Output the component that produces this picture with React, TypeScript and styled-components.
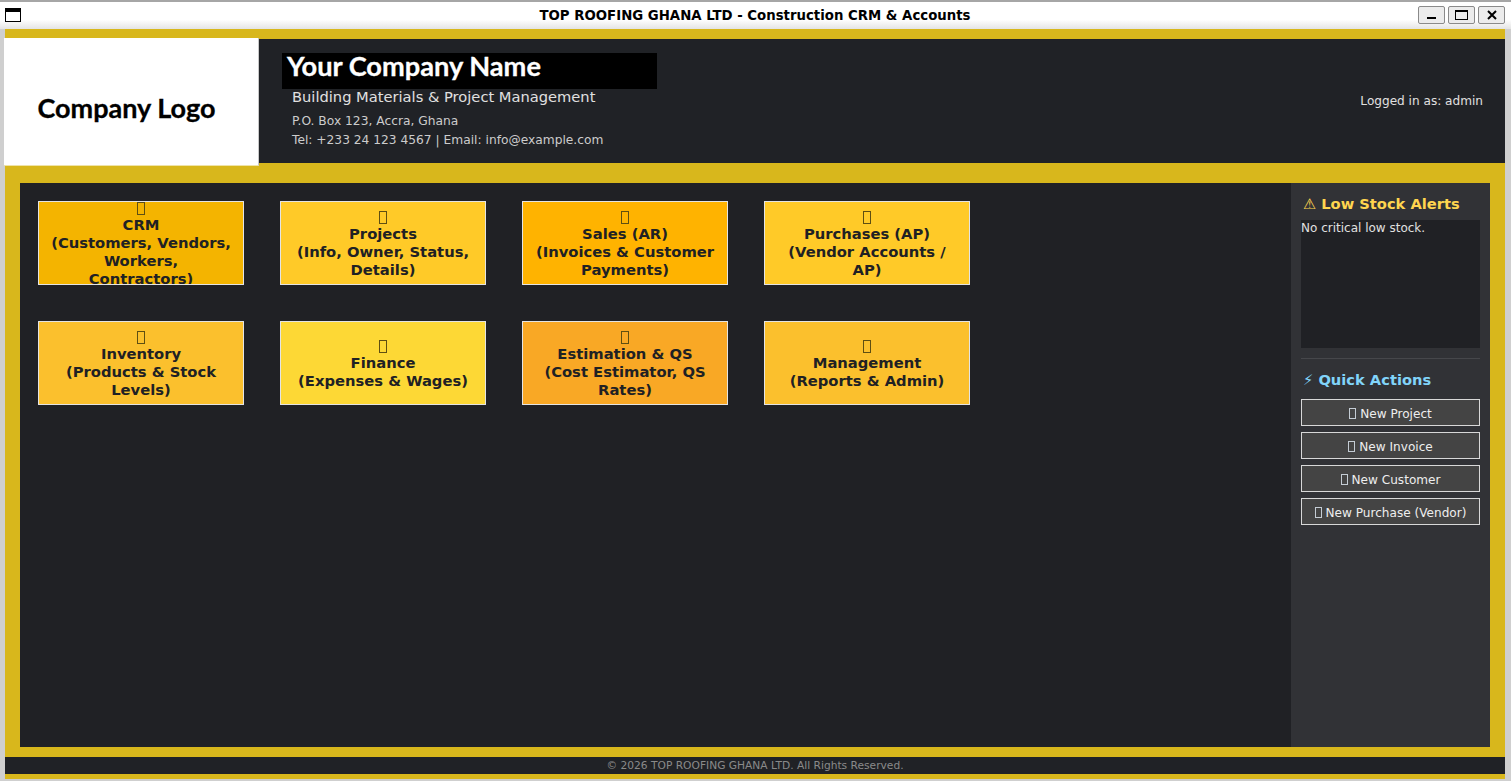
import { createGlobalStyle, styled } from "styled-components"

const tiles = [
    { bg: "#F4B400", lines: ["CRM", "(Customers, Vendors,", "Workers,", "Contractors)"] },
    { bg: "#FFCA28", lines: ["Projects", "(Info, Owner, Status,", "Details)"] },
    { bg: "#FFB300", lines: ["Sales (AR)", "(Invoices & Customer", "Payments)"] },
    { bg: "#FFCA28", lines: ["Purchases (AP)", "(Vendor Accounts /", "AP)"] },
    { bg: "#FBC02D", lines: ["Inventory", "(Products & Stock", "Levels)"] },
    { bg: "#FDD835", lines: ["Finance", "(Expenses & Wages)"] },
    { bg: "#F9A825", lines: ["Estimation & QS", "(Cost Estimator, QS", "Rates)"] },
    { bg: "#FBC02D", lines: ["Management", "(Reports & Admin)"] },
]

const actions = ["New Project", "New Invoice", "New Customer", "New Purchase (Vendor)"]

export default function App() {
    return (
        <>
            <Global />
            <Window>
                <TitleBar>
                    <WindowIcon width="16" height="14" viewBox="0 0 16 14">
                        <rect x="0" y="0" width="16" height="14" fill="#000" />
                        <rect x="1" y="4" width="14" height="9" fill="#fff" />
                    </WindowIcon>
                    <TitleText>TOP ROOFING GHANA LTD - Construction CRM &amp; Accounts</TitleText>
                    <WinButtons>
                        <WinButton>
                            <svg width="9" height="9" viewBox="0 0 9 9">
                                <rect x="0" y="7" width="9" height="2" fill="#000" />
                            </svg>
                        </WinButton>
                        <WinButton>
                            <svg width="13" height="10" viewBox="0 0 13 10">
                                <rect x="0.5" y="0.5" width="12" height="9" fill="none" stroke="#000" />
                                <rect x="0" y="0" width="13" height="2" fill="#000" />
                            </svg>
                        </WinButton>
                        <WinButton>
                            <svg width="10" height="10" viewBox="0 0 10 10">
                                <path d="M1 1 L9 9 M9 1 L1 9" stroke="#000" strokeWidth="2" fill="none" />
                            </svg>
                        </WinButton>
                    </WinButtons>
                </TitleBar>
                <Frame>
                    <Header>
                        <LogoBox>Company Logo</LogoBox>
                        <CompanyInfo>
                            <NameBanner>Your Company Name</NameBanner>
                            <Tagline>Building Materials &amp; Project Management</Tagline>
                            <Address>P.O. Box 123, Accra, Ghana</Address>
                            <Contact>Tel: +233 24 123 4567 | Email: info@example.com</Contact>
                        </CompanyInfo>
                        <LoggedIn>Logged in as: admin</LoggedIn>
                    </Header>
                    <Main>
                        <TileArea>
                            <TileGrid>
                                {tiles.map((t) => (
                                    <Tile key={t.lines[0]} $bg={t.bg}>
                                        <div><TileGlyph /></div>
                                        {t.lines.map((l) => (
                                            <div key={l}>{l}</div>
                                        ))}
                                    </Tile>
                                ))}
                            </TileGrid>
                        </TileArea>
                        <Sidebar>
                            <AlertTitle>⚠ Low Stock Alerts</AlertTitle>
                            <AlertBox>No critical low stock.</AlertBox>
                            <Divider />
                            <ActionsTitle>⚡ Quick Actions</ActionsTitle>
                            <ActionList>
                                {actions.map((a) => (
                                    <ActionButton key={a}><ButtonGlyph />{a}</ActionButton>
                                ))}
                            </ActionList>
                        </Sidebar>
                    </Main>
                    <Footer>© 2026 TOP ROOFING GHANA LTD. All Rights Reserved.</Footer>
                </Frame>
            </Window>
        </>
    )
}

const Global = createGlobalStyle`
html, body {
    margin: 0;
    padding: 0;
    height: 100%;
    overflow: hidden;
    background: #cfcfcf;
}
* {
    box-sizing: border-box;
}
`
const Window = styled.div`
width: 1511px;
height: 781px;
display: flex;
flex-direction: column;
font-family: "DejaVu Sans", sans-serif;
background: #cfcfcf;
padding-bottom: 2px;
`
const TitleBar = styled.div`
height: 29px;
flex-shrink: 0;
border-top: 2px solid #a6a6a6;
background: linear-gradient(#fff 0%, #fff 65%, #e4e4e4 100%);
display: flex;
align-items: center;
padding: 0 6px 2px 5px;
`
const WindowIcon = styled.svg`
flex-shrink: 0;
`
const TitleText = styled.div`
flex: 1;
text-align: center;
font-size: 13.3px;
font-weight: 700;
color: #000;
padding: 2px 0 0 71px;
white-space: nowrap;
`
const WinButtons = styled.div`
display: flex;
gap: 3px;
`
const WinButton = styled.div`
width: 27px;
height: 18px;
border: 1px solid #8a8a8a;
border-radius: 2px;
background: #ececec;
display: flex;
align-items: center;
justify-content: center;
`
const Frame = styled.div`
flex: 1;
margin: 0 6px 0 5px;
background: #D8B71C;
padding: 10px 0 5px;
display: flex;
flex-direction: column;
min-height: 0;
`
const Header = styled.div`
height: 124px;
flex-shrink: 0;
background: #202226;
display: flex;
`
const LogoBox = styled.div`
width: 255px;
height: 128px;
margin: -1px 0 0 -1px;
flex-shrink: 0;
background: #fff;
border-right: 1px solid #c8c8c8;
border-bottom: 1px solid #efe3a8;
display: flex;
align-items: center;
justify-content: center;
padding: 11px 9px 0 0;
font-family: "Lato", sans-serif;
font-weight: 700;
font-size: 27px;
color: #000;
-webkit-text-stroke: 0.3px #000;
position: relative;
z-index: 1;
`
const CompanyInfo = styled.div`
padding: 14px 0 0 23px;
display: flex;
flex-direction: column;
flex: 1;
`
const NameBanner = styled.div`
width: 375px;
height: 36px;
background: #000;
color: #fff;
font-family: "Lato", sans-serif;
font-weight: 700;
font-size: 27.2px;
line-height: 25px;
padding-left: 5px;
-webkit-text-stroke: 0.3px #fff;
`
const Tagline = styled.div`
margin: 0 0 0 10px;
font-size: 14.66px;
line-height: 16px;
color: #e0e0e0;
`
const Address = styled.div`
margin: 8px 0 0 10px;
font-size: 12.28px;
line-height: 16px;
color: #cccccc;
`
const Contact = styled.div`
margin: 3px 0 0 10px;
font-size: 12.24px;
line-height: 16px;
color: #cccccc;
`
const LoggedIn = styled.div`
align-self: center;
padding-right: 22px;
font-size: 12.1px;
color: #e0e0e0;
`
const Main = styled.div`
flex: 1;
min-height: 0;
margin: 20px 15px 10px;
display: flex;
background: #202125;
`
const TileArea = styled.div`
flex: 1;
padding: 18px;
`
const TileGrid = styled.div`
display: grid;
grid-template-columns: repeat(4, 206px);
grid-auto-rows: 84px;
gap: 36px;
`
const Tile = styled.div<{ $bg: string }>`
background: ${(p) => p.$bg};
border: 1px solid #e4e4e4;
display: flex;
flex-direction: column;
justify-content: center;
align-items: center;
overflow: hidden;
color: #202124;
font-size: 14.75px;
font-weight: 700;
line-height: 18px;
text-align: center;
white-space: nowrap;
`
// the missing-glyph boxes that stand where the icons fell back
const TileGlyph = styled.span`
display: inline-block;
width: 8px;
height: 13px;
border: 1px solid #5f4f12;
vertical-align: -3px;
`
const ButtonGlyph = styled.span`
display: inline-block;
width: 7px;
height: 11px;
border: 1px solid #c4ccd4;
margin-right: 4px;
flex-shrink: 0;
`
const Sidebar = styled.div`
width: 199px;
flex-shrink: 0;
background: #313236;
padding: 12px 10px 0;
display: flex;
flex-direction: column;
`
const AlertTitle = styled.div`
font-size: 14.67px;
font-weight: 700;
line-height: 18px;
color: #FFD54F;
padding-left: 2px;
`
const AlertBox = styled.div`
height: 128px;
margin-top: 7px;
background: #202125;
color: #e0e0e0;
font-size: 12px;
line-height: 17px;
`
const Divider = styled.div`
height: 1px;
margin-top: 10px;
background: #46474b;
`
const ActionsTitle = styled.div`
margin-top: 12px;
font-size: 14.67px;
font-weight: 700;
line-height: 18px;
color: #81D4FA;
padding-left: 2px;
`
const ActionList = styled.div`
margin-top: 10px;
display: flex;
flex-direction: column;
gap: 6px;
`
const ActionButton = styled.div`
height: 27px;
border: 1px solid #d8d8d8;
background: #444444;
color: #eeeeee;
font-size: 12.1px;
padding-top: 2px;
display: flex;
align-items: center;
justify-content: center;
white-space: nowrap;
`
const Footer = styled.div`
height: 17px;
flex-shrink: 0;
background: #202226;
color: #8a8a8a;
font-size: 10.67px;
line-height: 17px;
text-align: center;
`
